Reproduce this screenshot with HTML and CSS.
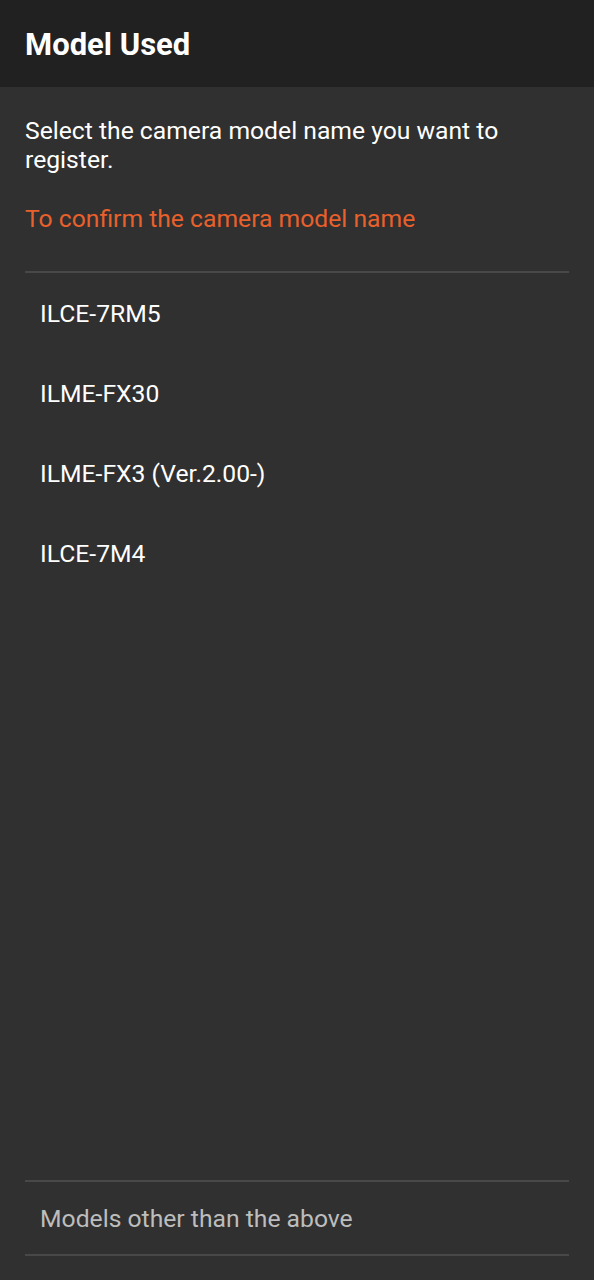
FILE: index.html
```html
<!DOCTYPE html>
<html lang="en">
<head>
<meta charset="utf-8">
<title>Model Used</title>
<link rel="stylesheet" href="styles.css">
</head>
<body>
<div class="screen">
  <header class="appbar">
    <h1 class="title">Model Used</h1>
  </header>
  <main class="content">
    <p class="desc">Select the camera model name you want to register.</p>
    <a class="confirm-link" href="#">To confirm the camera model name</a>
    <ul class="model-list">
      <li class="model-item">ILCE-7RM5</li>
      <li class="model-item">ILME-FX30</li>
      <li class="model-item">ILME-FX3 (Ver.2.00-)</li>
      <li class="model-item">ILCE-7M4</li>
    </ul>
    <div class="other">
      <div class="other-item">Models other than the above</div>
    </div>
  </main>
</div>
</body>
</html>
```

FILE: styles.css
```css
* { box-sizing: border-box; }
html, body {
  margin: 0;
  padding: 0;
  height: 100%;
  background: #303030;
  font-family: Roboto, "Noto Sans", "Liberation Sans", sans-serif;
  color: #ffffff;
}
.screen {
  display: flex;
  flex-direction: column;
  height: 1280px;
}
.appbar {
  height: 87px;
  background: #212121;
  display: flex;
  align-items: center;
  padding: 0 25px;
  flex-shrink: 0;
}
.title {
  margin: 0;
  font-size: 31px;
  font-weight: 700;
  color: #ffffff;
  line-height: 1;
  padding-top: 2px;
}
.content {
  flex: 1;
  display: flex;
  flex-direction: column;
  padding: 0 25px 24px;
}
.desc {
  margin: 29px 0 0;
  font-size: 24.7px;
  line-height: 29px;
  color: #ffffff;
}
.confirm-link {
  display: block;
  margin-top: 30px;
  font-size: 24.7px;
  line-height: 29px;
  color: #e8602c;
  text-decoration: none;
}
.model-list {
  list-style: none;
  margin: 38px 0 0;
  padding: 0;
  border-top: 2px solid #484848;
}
.model-item {
  height: 80px;
  display: flex;
  align-items: center;
  padding-left: 15px;
  font-size: 24.7px;
  color: #ffffff;
}
.other {
  margin-top: auto;
  border-top: 2px solid #484848;
  border-bottom: 2px solid #484848;
}
.other-item {
  height: 72px;
  display: flex;
  align-items: center;
  padding-left: 15px;
  font-size: 24.7px;
  color: #bdbdbd;
}
```
